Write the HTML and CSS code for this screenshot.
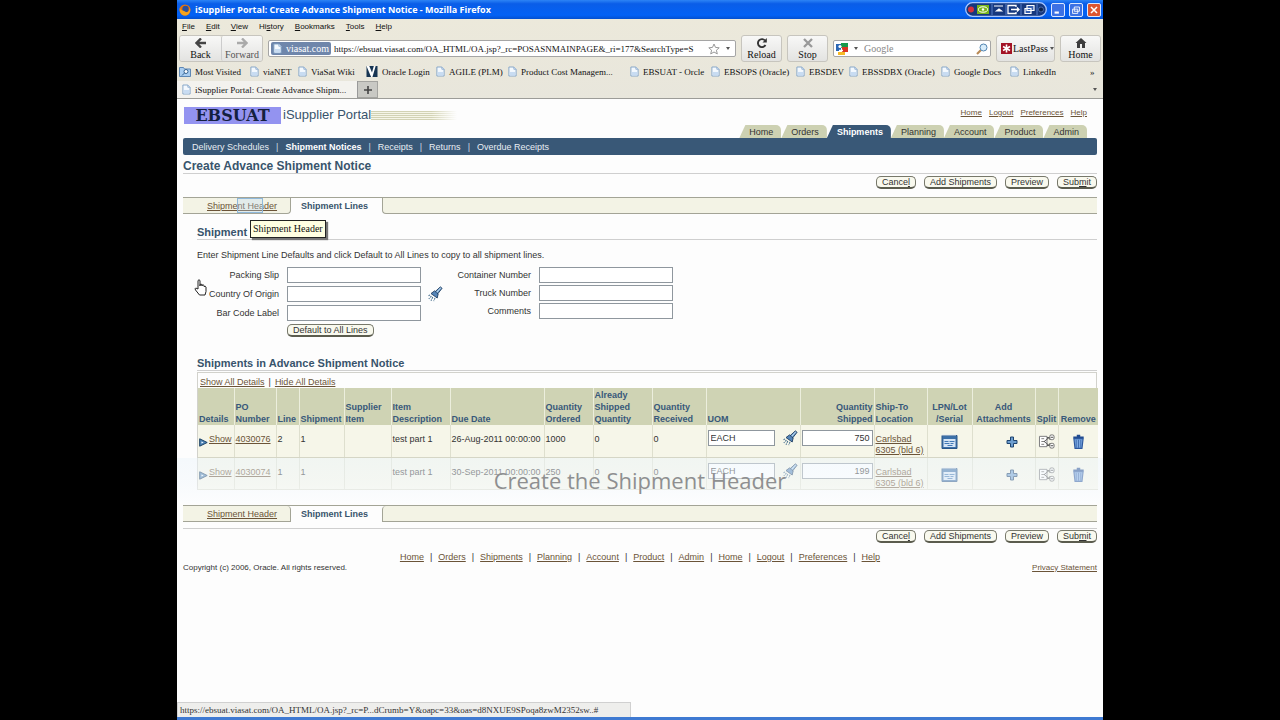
FILE: index.html
```html
<!DOCTYPE html>
<html lang="en">
<head>
<meta charset="utf-8">
<title>iSupplier Portal: Create Advance Shipment Notice</title>
<link rel="stylesheet" href="styles.css">
</head>
<body>
<svg class="sprites" aria-hidden="true">
  <symbol id="doc" viewBox="0 0 10 11"><path d="M1 .5h5.500L9 3v7.500H1z" fill="#f4f9fe" stroke="#7e9fc4"/><path d="M2 6h6v4H2z" fill="#c8dcf2"/><path d="M6.500.5V3H9" fill="#dce9f6" stroke="#7e9fc4" stroke-width=".8"/></symbol>
  <symbol id="torch" viewBox="0 0 18 18"><path d="M15 1l2 1.500-5.500 7-3-2.500z" fill="#6d9cc9" stroke="#1d3c60"/><path d="M8.500 5.500l4 3.500-1 4.500-7-5z" fill="#5585b8" stroke="#1d3c60"/><path d="M11 7l4.500-5" stroke="#cfe4f7"/><path d="M3.500 10l-2 1M5 11.500l-3 3M6.500 12.500l-2 4M9 13.500l-1.500 3.500" stroke="#48708f" stroke-width="1.200" stroke-dasharray="2 1"/></symbol>
  <symbol id="calendar" viewBox="0 0 16 15"><path d="M.5 1.500h15v13H.5z" fill="#3c70a8" stroke="#2a5688"/><path d="M1 1h14" stroke="#e5ecf3" stroke-width="2" stroke-dasharray="1 1"/><path d="M2 5h12v8H2z" fill="#d6e5f5"/><path d="M3 7.500h4M8 7.500h5M3 9.500h5M9 9.500h3M6 11.500h5" stroke="#4279b4"/></symbol>
  <symbol id="plus" viewBox="0 0 12 12"><path d="M4.500 1h3v3.500H11v3H7.500V11h-3V7.500H1v-3h3.500z" fill="#6c9dcf" stroke="#1f446f"/></symbol>
  <symbol id="split" viewBox="0 0 17 16"><path d="M1 2.500h8v11H1z" fill="#fff" stroke="#77777b"/><path d="M3 5h3M3 8h4M3 11h3" stroke="#777"/><path d="M6 8l5-4M6 8l5 4" stroke="#555"/><path d="M9 4h3v2M9 12h3v-2" fill="none" stroke="#333"/><rect x="12" y="1" width="4.500" height="5" rx="1.500" fill="#fff" stroke="#666"/><rect x="12" y="10" width="4.500" height="5" rx="1.500" fill="#fff" stroke="#666"/><path d="M13 3.500h2.500M13 12.500h2.500" stroke="#444"/></symbol>
  <symbol id="trash" viewBox="0 0 11 13"><path d="M1 3h9M4 1.500h3" stroke="#214b91" stroke-width="1.500"/><path d="M1.500 4h8l-1 8.500h-6z" fill="#7ba9e2" stroke="#2b579e"/><path d="M3.500 5v7M5.500 5v7M7.500 5v7" stroke="#3d68ab" stroke-width=".8"/></symbol>
  <symbol id="disclose" viewBox="0 0 9 9"><path d="M.7.8v7.400l7.500-3.700z" fill="#4f86b8" stroke="#1e4266"/><path d="M2.500 3.500v2l2-1z" fill="#fff"/></symbol>
</svg>

<div class="window">
  <header class="titlebar">
    <svg class="fox" viewBox="0 0 12 12"><circle cx="6" cy="6" r="5.500" fill="#e8730d"/><circle cx="6.500" cy="5" r="3.200" fill="#284f9e"/><path d="M.8 3.500C1.500 7 4 6 6 7.500S10 8 11 4c1 5-2 7.500-5 7.500S0 9 .8 3.500z" fill="#f5a31c"/></svg>
    <span class="caption">iSupplier Portal: Create Advance Shipment Notice - Mozilla Firefox</span>
    <svg class="pill" viewBox="0 0 82 15"><rect x=".7" y=".7" width="80.600" height="13.600" rx="6.800" fill="#16387e" stroke="#a8c7ff" stroke-width="1.300"/><circle cx="6" cy="7.500" r="3" fill="#d3313c"/><rect x="12" y="3" width="12" height="9" fill="#79b51c"/><ellipse cx="18" cy="7.500" rx="4.500" ry="2.700" fill="none" stroke="#fff"/><circle cx="18" cy="7.500" r="1.200" fill="#fff"/><path d="M27 2v11M41 2v11M56 2v11M72 2v11" stroke="#557cc7"/><path d="M29 4h9M31.500 9h5L34 7z" fill="#fff" stroke="#fff" stroke-width="1.200"/><path d="M51 5V3.500h-8v8h8V10M46 7.500h8M52 5.500l2 2-2 2" fill="none" stroke="#fff" stroke-width="1.300"/><path d="M62 3.500h7v5h-7zM60 6.500h6v5h-6z" fill="#3b62b0" stroke="#fff" stroke-width="1.200"/><circle cx="76" cy="7.500" r="2.500" fill="#0d2450" stroke="#6d8fce" stroke-width=".6"/></svg>
    <button class="wbtn" aria-label="Minimize"><svg viewBox="0 0 14 14"><path d="M3 10h5" stroke="#fff" stroke-width="2.500"/></svg></button>
    <button class="wbtn" aria-label="Restore"><svg viewBox="0 0 14 14"><path d="M5 3.500h6v5H5zM3 6h6v5H3z" fill="#4673dc" stroke="#fff"/></svg></button>
    <button class="wbtn close" aria-label="Close"><svg viewBox="0 0 14 14"><path d="M3.500 3.500l7 7M10.500 3.500l-7 7" stroke="#fff" stroke-width="1.800"/></svg></button>
  </header>

  <div class="chrome">
    <nav class="menubar"><span><u>F</u>ile</span><span><u>E</u>dit</span><span><u>V</u>iew</span><span>Hi<u>s</u>tory</span><span><u>B</u>ookmarks</span><span><u>T</u>ools</span><span><u>H</u>elp</span></nav>
    <div class="toolbar">
      <div class="pair">
        <button class="tool"><svg viewBox="0 0 12 10"><path d="M6 .5L1.500 5 6 9.500M2 5h9" fill="none" stroke="#444" stroke-width="2.400"/></svg>Back</button>
        <button class="tool"><svg viewBox="0 0 12 10"><path d="M6 .5L10.500 5 6 9.500M10 5H1" fill="none" stroke="#aaa" stroke-width="2.400"/></svg>Forward</button>
      </div>
      <div class="address">
        <span class="site"><svg class="doc"><use href="#doc"/></svg>viasat.com</span>
        <input class="url" aria-label="Address" value="https://ebsuat.viasat.com/OA_HTML/OA.jsp?_rc=POSASNMAINPAGE&amp;_ri=177&amp;SearchType=S">
        <svg class="star" viewBox="0 0 12 12"><path d="M6 1l1.500 3.400 3.700.4-2.800 2.400.9 3.700L6 9l-3.300 1.900.9-3.700L.8 4.800l3.700-.4z" fill="#fff" stroke="#999"/></svg>
        <span class="tri"></span>
      </div>
      <button class="tool single"><svg viewBox="0 0 12 10"><path d="M9.500 7A4 4 0 1 1 9 2.500" fill="none" stroke="#333" stroke-width="1.900"/><path d="M10.800 0v4.500H6.500z" fill="#333"/></svg>Reload</button>
      <button class="tool single"><svg viewBox="0 0 12 10"><path d="M2 1l8 8M10 1L2 9" stroke="#999" stroke-width="2.300"/></svg>Stop</button>
      <div class="search">
        <svg class="google" viewBox="0 0 12 12"><path d="M0 0h12v12H0z" fill="#fff"/><path d="M5 0h7v5H5z" fill="#16994b"/><path d="M6 4h6v5H6z" fill="#d93524"/><path d="M0 1h5v7H0z" fill="#2c67b4"/><path d="M2 9h7v3H2z" fill="#f6b926"/><circle cx="4" cy="3.500" r="1.600" fill="#fff"/><path d="M3 7.500h4" stroke="#fff" stroke-width="1.500"/></svg>
        <span class="tri"></span>
        <input class="query" aria-label="Search" placeholder="Google">
        <svg class="lens" viewBox="0 0 12 12"><path d="M1 11l4-4" stroke="#b98a55" stroke-width="2.200"/><circle cx="7.500" cy="4.500" r="3.500" fill="#d8edfb" stroke="#5486b2"/></svg>
      </div>
      <button class="lastpass"><svg viewBox="0 0 11 11"><path d="M0 0h11v11H0z" fill="#a31225"/><path d="M5.500 1.500v8M2 3.500l7 4M9 3.500l-7 4" stroke="#fff" stroke-width="1.600"/></svg>LastPass<span class="tri"></span></button>
      <button class="tool single"><svg viewBox="0 0 12 10"><path d="M6 0L.5 5H2v5h3V6h2v4h3V5h1.500z" fill="#3d3d3d"/></svg>Home</button>
    </div>
    <div class="bookmarks">
      <span><svg class="doc wide" viewBox="0 0 12 11"><path d="M.5 1.500h4l1 1.500h6v7.500H.5z" fill="#a9cdf0" stroke="#5e87b4"/><circle cx="7" cy="5.500" r="2" fill="#fff" stroke="#376491"/><path d="M5.500 7L3 9.500" stroke="#376491"/></svg>Most Visited</span>
      <span><svg class="doc"><use href="#doc"/></svg>viaNET</span>
      <span><svg class="doc"><use href="#doc"/></svg>ViaSat Wiki</span>
      <span><svg class="doc wide" viewBox="0 0 12 12"><path d="M0 0h12v12H0z" fill="#173553"/><path d="M0 0h3l3 7 2-7h2L6.500 12H5z" fill="#fff"/></svg>Oracle Login</span>
      <span><svg class="doc"><use href="#doc"/></svg>AGILE (PLM)</span>
      <span><svg class="doc"><use href="#doc"/></svg>Product Cost Managem...</span>
      <span><svg class="doc"><use href="#doc"/></svg>EBSUAT - Orcle</span>
      <span><svg class="doc"><use href="#doc"/></svg>EBSOPS (Oracle)</span>
      <span><svg class="doc"><use href="#doc"/></svg>EBSDEV</span>
      <span><svg class="doc"><use href="#doc"/></svg>EBSSDBX (Oracle)</span>
      <span><svg class="doc"><use href="#doc"/></svg>Google Docs</span>
      <span><svg class="doc"><use href="#doc"/></svg>LinkedIn</span>
      <span class="more">»</span>
    </div>
    <div class="tabstrip">
      <div class="btab"><svg class="doc"><use href="#doc"/></svg>iSupplier Portal: Create Advance Shipm...</div>
      <button class="newtab" aria-label="New tab"><svg viewBox="0 0 8 8"><path d="M4 0v8M0 4h8" stroke="#444" stroke-width="1.600"/></svg></button>
      <span class="tri"></span>
    </div>
  </div>

  <main class="page">
    <div class="brandrow">
      <div class="logo">EBSUAT</div>
      <div class="product">iSupplier Portal</div>
      <div class="stripes"></div>
      <nav class="global"><a href="#">Home</a><a href="#">Logout</a><a href="#">Preferences</a><a href="#">Help</a></nav>
    </div>
    <nav class="maintabs">
      <a href="#">Home</a><a href="#">Orders</a><a href="#" class="on">Shipments</a><a href="#">Planning</a><a href="#">Account</a><a href="#">Product</a><a href="#">Admin</a>
    </nav>
    <nav class="subnav"><a href="#">Delivery Schedules</a><i>|</i><a href="#" class="on">Shipment Notices</a><i>|</i><a href="#">Receipts</a><i>|</i><a href="#">Returns</a><i>|</i><a href="#">Overdue Receipts</a></nav>
    <h1>Create Advance Shipment Notice</h1>
    <div class="actions"><button class="pillbtn">Cance<u>l</u></button><button class="pillbtn">Add Shipments</button><button class="pillbtn">Preview</button><button class="pillbtn">Sub<u>m</u>it</button></div>

    <div class="steps">
      <div class="step"><a href="#">Shipment Header</a><span class="hover"></span><span class="tip">Shipment Header</span></div>
      <div class="step on">Shipment Lines</div>
      <div class="step rest"></div>
    </div>

    <section class="section">
      <h2>Shipment Line Defaults</h2>
      <p class="hint">Enter Shipment Line Defaults and click Default to All Lines to copy to all shipment lines.</p>
      <div class="form">
        <div class="fields">
          <label for="slip">Packing Slip</label><input id="slip"><span></span>
          <label for="origin">Country Of Origin</label><input id="origin"><svg class="torch"><use href="#torch"/></svg>
          <label for="barcode">Bar Code Label</label><input id="barcode"><span></span>
          <span></span><button class="pillbtn fill">Default to All Lines</button>
        </div>
        <div class="fields second">
          <label for="container">Container Number</label><input id="container">
          <label for="truck">Truck Number</label><input id="truck">
          <label for="comments">Comments</label><input id="comments">
        </div>
        <svg class="hand" viewBox="0 0 14 18"><path d="M4 11V2.500q1-1.500 2 0V8V6.500q1.200-1 2 .3V8v-.8q1.200-1 2 .3v1q1.500-.8 2 .5v4.500L11 17H5.500L1.500 12q-1-1.500.3-2z" fill="#fff" stroke="#222"/></svg>
      </div>
    </section>

    <section class="section lines">
      <h2>Shipments in Advance Shipment Notice</h2>
      <div class="tablebox">
        <div class="toggles"><a href="#">Show All Details</a><i>|</i><a href="#">Hide All Details</a></div>
        <table>
          <colgroup><col class="c36"><col class="c42"><col class="c23"><col class="c45"><col class="c47"><col class="c59"><col class="c94"><col class="c49"><col class="c59"><col class="c54"><col class="c94"><col class="c74"><col class="c53"><col class="c45"><col class="c63"><col class="c23"><col class="c40"></colgroup>
          <thead><tr><th>Details</th><th>PO Number</th><th>Line</th><th>Shipment</th><th>Supplier Item</th><th>Item Description</th><th>Due Date</th><th>Quantity Ordered</th><th>Already Shipped Quantity</th><th>Quantity Received</th><th>UOM</th><th class="r">Quantity<br>Shipped</th><th>Ship-To Location</th><th class="c">LPN/Lot<br>/Serial</th><th class="c">Add Attachments</th><th class="c">Split</th><th class="c">Remove</th></tr></thead>
          <tbody>
            <tr><td><div class="show"><svg><use href="#disclose"/></svg><a href="#">Show</a></div></td><td><a href="#">4030076</a></td><td>2</td><td>1</td><td></td><td>test part 1</td><td>26-Aug-2011 00:00:00</td><td>1000</td><td>0</td><td>0</td><td><div class="uom"><input aria-label="UOM" value="EACH"><svg class="torch"><use href="#torch"/></svg></div></td><td><input class="qty" aria-label="Quantity Shipped" value="750"></td><td><a href="#">Carlsbad<br>6305 (bld 6)</a></td><td class="c"><svg class="ic"><use href="#calendar"/></svg></td><td class="c"><svg class="ic add"><use href="#plus"/></svg></td><td class="c"><svg class="ic"><use href="#split"/></svg></td><td class="c"><svg class="ic"><use href="#trash"/></svg></td></tr>
            <tr><td><div class="show"><svg><use href="#disclose"/></svg><a href="#">Show</a></div></td><td><a href="#">4030074</a></td><td>1</td><td>1</td><td></td><td>test part 1</td><td>30-Sep-2011 00:00:00</td><td>250</td><td>0</td><td>0</td><td><div class="uom"><input aria-label="UOM" value="EACH"><svg class="torch"><use href="#torch"/></svg></div></td><td><input class="qty" aria-label="Quantity Shipped" value="199"></td><td><a href="#">Carlsbad<br>6305 (bld 6)</a></td><td class="c"><svg class="ic"><use href="#calendar"/></svg></td><td class="c"><svg class="ic add"><use href="#plus"/></svg></td><td class="c"><svg class="ic"><use href="#split"/></svg></td><td class="c"><svg class="ic"><use href="#trash"/></svg></td></tr>
          </tbody>
        </table>
      </div>
      <div class="banner">Create the Shipment Header</div>
    </section>

    <div class="steps bottom">
      <div class="step"><a href="#">Shipment Header</a></div>
      <div class="step on">Shipment Lines</div>
      <div class="step rest"></div>
    </div>
    <div class="actions low"><button class="pillbtn">Cance<u>l</u></button><button class="pillbtn">Add Shipments</button><button class="pillbtn">Preview</button><button class="pillbtn">Sub<u>m</u>it</button></div>
    <nav class="footnav"><a href="#">Home</a><i>|</i><a href="#">Orders</a><i>|</i><a href="#">Shipments</a><i>|</i><a href="#">Planning</a><i>|</i><a href="#">Account</a><i>|</i><a href="#">Product</a><i>|</i><a href="#">Admin</a><i>|</i><a href="#">Home</a><i>|</i><a href="#">Logout</a><i>|</i><a href="#">Preferences</a><i>|</i><a href="#">Help</a></nav>
    <footer class="legal"><span>Copyright (c) 2006, Oracle. All rights reserved.</span><a href="#">Privacy Statement</a></footer>
  </main>
  <div class="status">https://ebsuat.viasat.com/OA_HTML/OA.jsp?_rc=P...dCrumb=Y&amp;oapc=33&amp;oas=d8NXUE9SPoqa8zwM2352sw..#</div>
</div>
</body>
</html>
```
FILE: styles.css
```css
* { box-sizing: border-box; }
body {
  margin: 0;
  padding: 0 177px;
  background: #000;
  color: #333;
  font: 9px/12px "Liberation Sans", Arial, sans-serif;
}
button, input { font: inherit; color: inherit; margin: 0; padding: 0; border: 0; background: none; }
i { font-style: normal; }
a { color: #6b5438; }
svg { display: block; flex: none; }
.sprites { position: absolute; width: 0; height: 0; }

.window {
  min-height: 100vh;
  display: flex;
  flex-direction: column;
  background: #fdfdfd;
  border-bottom: 3px solid #3f7ad2;
}

/* Title bar */
.titlebar {
  display: flex;
  align-items: center;
  gap: 4px;
  height: 19px;
  padding: 0 2px;
  background: linear-gradient(#2d84f5, #0a5de8 20%, #0362f5 80%, #0450cf);
}
.fox { width: 12px; height: 12px; }
.caption { flex: 1; color: #fff; font: 700 9px/12px "Open Sans", sans-serif; white-space: nowrap; }
.pill { width: 82px; height: 15px; }
.wbtn { width: 14px; height: 14px; border: 1px solid #dce8ff; border-radius: 2px; background: #3c71e4; }
.wbtn.close { background: #dc5530; }

/* Browser chrome */
.chrome { background: linear-gradient(#ece9db, #e8e6dc); border-bottom: 1px solid #9c9c98; font: 10px/12px "Liberation Serif", serif; color: #111; }
.menubar { display: flex; gap: 11px; padding: 1px 5px; height: 15px; font: 8px/13px "Liberation Sans", sans-serif; }
.toolbar { display: flex; gap: 5px; height: 28px; padding: 1px 2px 0; align-items: stretch; }
.pair { display: flex; border: 1px solid #c7c5be; border-radius: 3px; }
.pair .tool { width: 41px; }
.pair .tool + .tool { border-left: 1px solid #ccc; color: #555; }
.tool { display: flex; flex-direction: column; align-items: center; justify-content: center; gap: 1px; line-height: 11px; background: linear-gradient(#f8f8f7, #e3e3e1); border-radius: 2px; }
.tool svg { width: 12px; height: 10px; }
.single { width: 41px; border: 1px solid #c7c5be; border-radius: 3px; }
.address, .search { display: flex; align-items: center; gap: 3px; align-self: center; height: 17px; padding: 0 2px; border: 1px solid #a5a5a5; border-radius: 2px; background: #fff; }
.address { flex: 1; min-width: 0; }
.site { display: flex; align-items: center; gap: 4px; height: 13px; padding: 0 2px; border-radius: 2px; background: #6f86ab; color: #fff; }
.url { flex: 1; min-width: 0; font-size: 9px; }
.star { width: 12px; height: 12px; }
.search { width: 158px; }
.google, .lens { width: 12px; height: 12px; }
.query { flex: 1; min-width: 0; }
.query::placeholder { color: #888; opacity: 1; }
.tri { flex: none; border: 2px solid transparent; border-top: 3px solid #555; border-bottom: 0; margin: 0 3px; }
.lastpass { display: flex; align-items: center; gap: 1px; width: 59px; padding: 0 4px; border: 1px solid #c7c5be; border-radius: 3px; background: linear-gradient(#f8f8f7, #e3e3e1); }
.lastpass svg { width: 11px; height: 11px; }
.lastpass .tri { margin: 0 1px; }
.doc { width: 9px; height: 11px; }
.doc.wide { width: 12px; }
.bookmarks { display: grid; grid-template-columns: 71fr 48fr 68fr 70fr 72fr 122fr 81fr 85fr 53fr 92fr 69fr 80fr 10fr; height: 19px; padding: 0 3px 0 2px; align-items: center; font-size: 9px; }
.bookmarks span { display: flex; align-items: center; gap: 4px; min-width: 0; white-space: nowrap; }
.tabstrip { display: flex; align-items: center; height: 17px; padding-right: 3px; font-size: 9px; }
.btab { display: flex; align-items: center; gap: 4px; width: 181px; height: 17px; padding: 0 5px; border-right: 1px solid #999; background: #f3f2ee; white-space: nowrap; }
.newtab { display: grid; place-items: center; width: 20px; height: 17px; border: 1px solid #a4a4a0; border-left: 0; background: #c9c9c4; }
.newtab svg { width: 8px; height: 8px; }
.tabstrip > .tri { margin-left: auto; }

/* Page */
.page { flex: 1; padding: 6px 6px 0; }
.brandrow { display: flex; align-items: center; height: 20px; padding-right: 10px; }
.logo { width: 97px; height: 17px; margin-left: 1px; background: #9393f0; color: #14203f; font: 700 16px/17px "DejaVu Serif", serif; text-align: center; }
.product { margin-left: 2px; color: #38546c; font-size: 13px; white-space: nowrap; }
.stripes { width: 86px; height: 9px; background: linear-gradient(90deg, transparent 70%, #fdfdfd), repeating-linear-gradient(#d2d2b4 0 1px, #f5f5e8 1px 2px); }
.global { display: flex; gap: 7px; margin: -4px 0 0 auto; font-size: 8px; }
.maintabs { display: flex; justify-content: flex-end; height: 13px; padding-right: 10px; }
.maintabs a { padding: 0 8px 0 10px; background: #cdd1b2; color: #333; line-height: 14px; text-decoration: none; border-top-right-radius: 5px; clip-path: polygon(6px 0, 100% 0, 100% 100%, 0 100%); }
.maintabs a.on { background: #395877; color: #fff; font-weight: 700; }
.subnav { display: flex; align-items: center; gap: 7px; height: 17px; padding: 0 9px; border-radius: 2px; background: #395877; color: #cfd8e0; }
.subnav a { color: #e8eef3; text-decoration: none; }
.subnav a.on { color: #fff; font-weight: 700; }
h1 { margin: 2px 0 0; height: 17px; border-bottom: 1px solid #cfcfcf; color: #38546c; font-size: 12px; line-height: 18px; }
.actions { display: flex; justify-content: flex-end; gap: 8px; height: 23px; padding-top: 2px; }
.pillbtn { height: 13px; padding: 0 5px; border: 1px solid #77786a; border-bottom: 2px solid #5b5c4e; border-radius: 5px; background: #f9f9ee; color: #333; line-height: 10px; white-space: nowrap; }
.steps { display: flex; height: 17px; border-top: 1px solid #a3a496; }
.step { position: relative; width: 108px; padding: 0 0 0 24px; border-right: 1px solid #a3a496; border-bottom: 1px solid #a3a496; border-bottom-right-radius: 4px; background: #f3f3e5; line-height: 16px; white-space: nowrap; }
.step.on { width: 91px; padding-left: 10px; border: 0; background: none; color: #38546c; font-weight: 700; }
.step.rest { flex: 1; border-left: 1px solid #a3a496; border-right: 0; border-radius: 0 0 0 4px; }
.hover { position: absolute; left: 54px; top: 0; width: 26px; height: 15px; border: 1px solid #8fb8da; background: rgba(190, 220, 245, .3); }
.tip { position: absolute; z-index: 2; left: 67px; top: 22px; padding: 1px 2px; border: 1px solid #222; background: #ffffe1; color: #111; font: 10px/14px "Liberation Serif", serif; box-shadow: 2px 2px 1px #777; }

.section { position: relative; margin-left: 14px; padding-top: 11px; }
h2 { margin: 0; border-bottom: 1px solid #cfcfcf; color: #38546c; font-size: 11px; line-height: 14px; }
.hint { margin: 9px 0 6px; }
.form { position: relative; display: flex; align-items: flex-start; gap: 8px; }
.fields { display: grid; grid-template-columns: 85px 134px 18px; column-gap: 5px; row-gap: 3px; align-items: center; }
.fields.second { grid-template-columns: 82px 134px; row-gap: 2px; }
.fields label { padding-right: 3px; text-align: right; }
.fields input { height: 16px; border: 1px solid #8f979e; background: #fff; }
.torch { width: 18px; height: 16px; }
.fill { justify-self: start; }
.hand { position: absolute; left: -3px; top: 11px; width: 14px; height: 18px; }

.lines { padding-top: 19px; }
.tablebox { margin-top: 1px; border: 1px solid #d2d2cc; border-bottom: 0; }
.toggles { display: flex; gap: 4px; height: 15px; padding: 3px 2px 0; }
table { width: 100%; border-collapse: collapse; table-layout: fixed; }
th, td { padding: 0 1px; border-right: 1px solid #dedfce; text-align: left; }
th { height: 37px; background: #cfd3b4; border-color: #eceedd; color: #38587a; line-height: 12px; vertical-align: bottom; }
td { height: 32px; padding-top: 9px; border-bottom: 1px solid #d5d6c6; background: #f6f6e9; vertical-align: top; white-space: nowrap; line-height: 11px; }
th:last-child, td:last-child { border-right: 0; }
.r { text-align: right; }
.c { text-align: center; }
.c23 { width: 23px; } .c36 { width: 36px; } .c40 { width: 40px; } .c42 { width: 42px; } .c45 { width: 45px; }
.c47 { width: 47px; } .c49 { width: 49px; } .c53 { width: 53px; } .c54 { width: 54px; } .c59 { width: 59px; }
.c63 { width: 63px; } .c74 { width: 74px; } .c94 { width: 94px; }
td:nth-child(11), td:nth-child(12) { padding-top: 5px; }
.show { display: flex; gap: 1px; }
.show svg { width: 9px; height: 9px; margin-top: 4px; }
.uom { display: flex; gap: 6px; }
.uom input { flex: 1; min-width: 0; padding: 0 2px; }
td input { height: 16px; border: 1px solid #8f979e; background: #fff; }
.qty { display: block; width: 100%; padding: 0 2px; text-align: right; }
.ic { width: 17px; height: 15px; margin: 0 auto; }
.ic.add { height: 12px; width: 12px; margin: 2px 16px 0 auto; }
.banner { position: absolute; left: -20px; right: -6px; bottom: -13px; height: 45px; border-radius: 0 0 6px 6px; background: linear-gradient(rgba(236, 245, 251, .5), rgba(243, 248, 252, .5) 60%, rgba(252, 253, 254, .8)); color: #8e8f90; font: 22px/45px "Open Sans", sans-serif; text-align: center; }

.steps.bottom { margin-top: 15px; }
.bottom .step { border-radius: 0 4px 0 0; }
.bottom .step.rest { border-radius: 4px 0 0 0; }
.actions.low { margin-top: 6px; height: 23px; padding-top: 1px; border-top: 1px solid #cfcfcf; }
.footnav { display: flex; justify-content: center; gap: 6px; line-height: 12px; }
.legal { display: flex; justify-content: space-between; font-size: 8px; line-height: 9px; }
.status { align-self: flex-start; width: 454px; height: 15px; padding: 0 2px; border: 1px solid #d0d0d0; border-bottom: 0; background: #eeeeec; color: #333; font: 9px/14px "Liberation Serif", serif; white-space: nowrap; }
```
